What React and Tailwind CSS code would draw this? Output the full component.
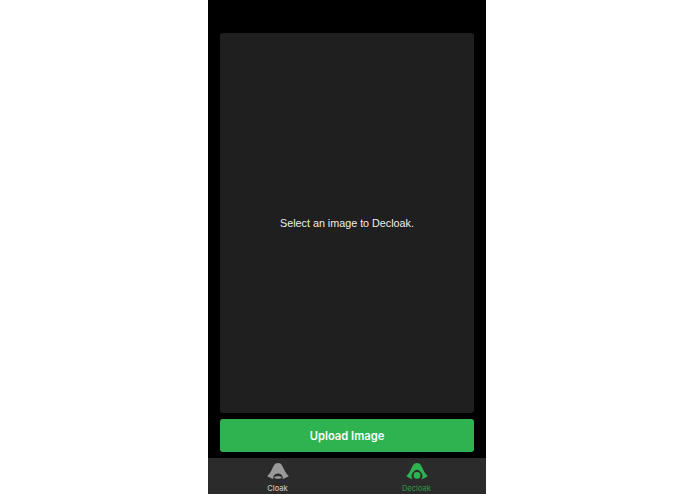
const CloakIcon = () => (
  <svg width="22" height="17" viewBox="0 0 22 17" className="block">
    <path
      fill="#9a9a9a"
      fillRule="evenodd"
      d="M8.6 0.6 C9.8 -0.1 12.2 -0.1 13.4 0.6 C14.8 1.6 16.2 4.6 17.6 7.6 C18.8 10 20.4 12 21.8 13 C20 14.2 17.6 15.4 15.6 15.9 C16 14.4 15.4 12.6 14.2 11.6 C12.4 10.2 9.6 10.2 7.8 11.6 C6.6 12.6 6 14.4 6.4 15.9 C4.4 15.4 2 14.2 0.2 13 C1.6 12 3.2 10 4.4 7.6 C5.8 4.6 7.2 1.6 8.6 0.6 Z"
    />
    <path fill="#9a9a9a" d="M7.2 14.2 C8.6 12.8 13.4 12.8 14.8 14.2 C13.8 16.4 8.2 16.4 7.2 14.2 Z" />
  </svg>
);

const DecloakIcon = () => (
  <svg width="22" height="17" viewBox="0 0 22 17" className="block">
    <path
      fill="#2fb350"
      fillRule="evenodd"
      d="M8.6 0.6 C9.8 -0.1 12.2 -0.1 13.4 0.6 C14.8 1.6 16.2 4.6 17.6 7.6 C18.8 10 20.4 12 21.8 13 C20 14.4 17.4 15.6 15.2 16.2 C16.6 14.6 17 12.8 16 11 C14.8 8.4 12.8 6.8 11 6.8 C9.2 6.8 7.2 8.4 6 11 C5 12.8 5.4 14.6 6.8 16.2 C4.6 15.6 2 14.4 0.2 13 C1.6 12 3.2 10 4.4 7.6 C5.8 4.6 7.2 1.6 8.6 0.6 Z"
    />
    <ellipse cx="11" cy="12.4" rx="3.4" ry="3.3" fill="#2fb350" />
  </svg>
);

const TabItem = ({ icon, label, color }) => (
  <div className="flex-1 flex flex-col items-center pt-[5px]">
    {icon}
    <span className={`text-[7.5px] leading-[10px] mt-[4px] font-medium ${color}`}>{label}</span>
  </div>
);

export default function App() {
  return (
    <div className="w-[695px] h-[494px] bg-white flex justify-center overflow-hidden font-['Inter','Liberation_Sans',sans-serif]">
      <div className="w-[278px] h-full bg-black flex flex-col ml-[-1px]">
        <div className="flex-1 flex flex-col gap-[6px] px-3 pt-[33px] pb-[6px]">
          <div className="flex-1 bg-[#1f1f1f] rounded-[3px] flex items-center justify-center">
            <p className="text-[10.75px] text-[#eeeeee] pt-[1px] font-['Liberation_Sans',sans-serif]">Select an image to Decloak.</p>
          </div>
          <button className="h-[33px] bg-[#2fb350] rounded-[3px] text-white text-[11.2px] font-semibold pt-[1px]">
            Upload Image
          </button>
        </div>
        <div className="h-[36px] bg-[#2b2b2b] flex">
          <TabItem icon={<CloakIcon />} label="Cloak" color="text-[#c4c4c4]" />
          <TabItem icon={<DecloakIcon />} label="Decloak" color="text-[#2c8c45]" />
        </div>
      </div>
    </div>
  );
}
